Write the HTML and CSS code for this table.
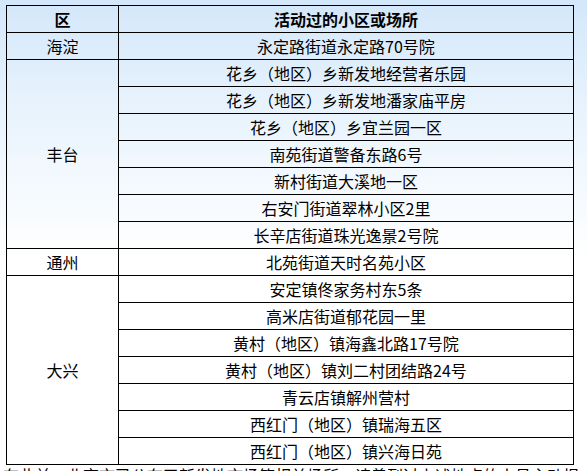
FILE: index.html
```html
<!DOCTYPE html>
<html lang="zh-CN">
<head>
<meta charset="utf-8">
<title>活动过的小区或场所</title>
<link rel="stylesheet" href="styles.css">
</head>
<body>
<div class="page">
  <table class="places">
    <colgroup><col class="c-dist"><col class="c-place"></colgroup>
    <thead>
      <tr><th>区</th><th>活动过的小区或场所</th></tr>
    </thead>
    <tbody>
      <tr><td>海淀</td><td>永定路街道永定路70号院</td></tr>
      <tr><td rowspan="7">丰台</td><td>花乡（地区）乡新发地经营者乐园</td></tr>
      <tr><td>花乡（地区）乡新发地潘家庙平房</td></tr>
      <tr><td>花乡（地区）乡宜兰园一区</td></tr>
      <tr><td>南苑街道警备东路6号</td></tr>
      <tr><td>新村街道大溪地一区</td></tr>
      <tr><td>右安门街道翠林小区2里</td></tr>
      <tr><td>长辛店街道珠光逸景2号院</td></tr>
      <tr><td>通州</td><td>北苑街道天时名苑小区</td></tr>
      <tr><td rowspan="7">大兴</td><td>安定镇佟家务村东5条</td></tr>
      <tr><td>高米店街道郁花园一里</td></tr>
      <tr><td>黄村（地区）镇海鑫北路17号院</td></tr>
      <tr><td>黄村（地区）镇刘二村团结路24号</td></tr>
      <tr><td>青云店镇解州营村</td></tr>
      <tr><td>西红门（地区）镇瑞海五区</td></tr>
      <tr><td>西红门（地区）镇兴海日苑</td></tr>
    </tbody>
  </table>
  <p class="note">在此前，北京市已公布了新发地市场等相关场所，请曾到过上述地点的人员主动报告。</p>
</div>
</body>
</html>
```

FILE: styles.css
```css
html, body {
  margin: 0;
  padding: 0;
  height: 100%;
}
body {
  background: linear-gradient(to bottom, #d3e7fa 0px, #eaf4fd 120px, #ffffff 260px);
  font-family: "Noto Sans CJK SC", "Noto Sans", sans-serif;
  color: #000;
  overflow: hidden;
}
.page {
  padding: 5px 0 0 6px;
  overflow: hidden;
}
.places {
  border-collapse: collapse;
  table-layout: fixed;
  width: 568px;
  font-size: 16px;
}
.c-dist { width: 112px; }
.places th,
.places td {
  border: 1px solid #000;
  height: 26px;
  padding: 0;
  line-height: 24px;
  text-align: center;
  vertical-align: middle;
  font-weight: normal;
  white-space: nowrap;
}
.places th {
  font-weight: bold;
}
.note {
  margin: 0 0 0 -3px;
  width: 576px;
  font-size: 16px;
  line-height: 20px;
}
```
